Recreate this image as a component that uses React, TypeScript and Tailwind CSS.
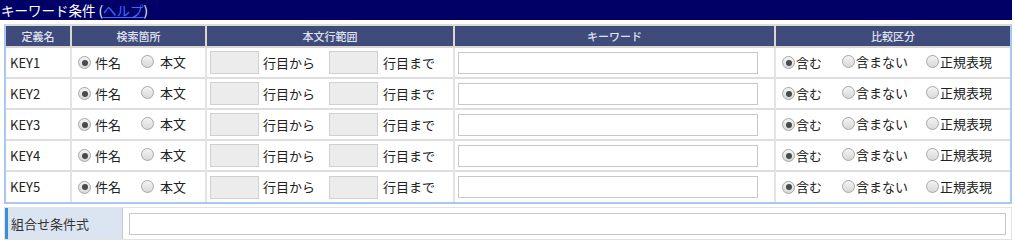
import React from "react";

const font = { fontFamily: '"Noto Sans CJK JP", "Noto Sans", sans-serif' };

const Radio = ({ checked, label, gap = "ml-[5px]" }: { checked?: boolean; label: string; gap?: string }) => (
  <span className="inline-flex items-center">
    <span className="w-[13px] h-[13px] rounded-full border border-[#a8a8a8] bg-gradient-to-b from-[#f4f4f4] to-[#d8d8d8] flex items-center justify-center shrink-0">
      {checked && <span className="w-[6px] h-[6px] rounded-full bg-[#4a4a4a]" />}
    </span>
    <span className={gap}>{label}</span>
  </span>
);

const keys = ["KEY1", "KEY2", "KEY3", "KEY4", "KEY5"];

export default function App() {
  return (
    <div className="w-[1012px] bg-white text-[#222] text-[13px]" style={font}>
      {/* Title */}
      <div className="h-[20px] bg-[#000066] text-white text-[13.5px] leading-[20px] px-[1px]">
        キーワード条件 (<span className="text-[#3b6cff] underline">ヘルプ</span>)
      </div>

      {/* Conditions table */}
      <div className="ml-[4px] mt-[4px] w-[1008px] border-t-2 border-t-[#dcdcd4] border-l-2 border-r-2 border-b-2 border-l-[#a9c8f0] border-r-[#a9c8f0] border-b-[#a9c8f0]">
        <table className="w-full border-collapse table-fixed">
          <colgroup>
            <col className="w-[65px]" />
            <col className="w-[135px]" />
            <col className="w-[248px]" />
            <col className="w-[321px]" />
            <col />
          </colgroup>
          <thead>
            <tr className="h-[21px] bg-[#3f4b7b] text-[#dfe2ee] text-[11px]">
              {["定義名", "検索箇所", "本文行範囲", "キーワード", "比較区分"].map((h, i) => (
                <th key={h} className={`border-b-2 border-[#d8d8d0] ${i > 0 ? "border-l-2" : ""} font-medium`}>
                  {h}
                </th>
              ))}
            </tr>
          </thead>
          <tbody>
            {keys.map((k, r) => (
              <tr key={k} className={`h-[31px] ${r < keys.length - 1 ? "border-b-2 border-[#dedede]" : ""}`}>
                <td className="pl-[4px]">{k}</td>
                <td className="border-l-2 border-[#e4e4e4] pl-[6px]">
                  <div className="flex items-center">
                    <Radio checked label="件名" gap="ml-[4px]" />
                    <span className="ml-[20px]">
                      <Radio label="本文" gap="ml-[6px]" />
                    </span>
                  </div>
                </td>
                <td className="border-l-2 border-[#e4e4e4] pl-[3px]">
                  <div className="flex items-center">
                    <span className="w-[49px] h-[23px] bg-[#ececec] border border-[#d0d0d0]" />
                    <span className="ml-[4px]">行目から</span>
                    <span className="ml-[14px] w-[49px] h-[23px] bg-[#ececec] border border-[#d0d0d0]" />
                    <span className="ml-[5px]">行目まで</span>
                  </div>
                </td>
                <td className="border-l-2 border-[#e4e4e4] pl-[3px]">
                  <div className="w-[300px] h-[22px] bg-white border border-[#c8c8c8]" />
                </td>
                <td className="border-l-2 border-[#e4e4e4] pl-[6px]">
                  <div className="flex items-center">
                    <Radio checked label="含む" gap="ml-[1px]" />
                    <span className="ml-[20px]">
                      <Radio label="含まない" gap="ml-[1px]" />
                    </span>
                    <span className="ml-[18px]">
                      <Radio label="正規表現" gap="ml-[1px]" />
                    </span>
                  </div>
                </td>
              </tr>
            ))}
          </tbody>
        </table>
      </div>

      {/* Combination expression */}
      <div className="ml-[4px] mt-[3px] w-[1008px] h-[33px] flex items-stretch bg-[#f4f4f4] border border-[#e2e2e2]">
        <div className="w-[118px] bg-[#dbe5f1] border-l-[3px] border-[#3a8ee0] border-r border-r-[#c8c8c8] flex items-center pl-[3px] text-[#333]">
          組合せ条件式
        </div>
        <div className="flex-1 bg-white flex items-center pl-[6px] pr-[5px]">
          <div className="w-full h-[22px] border border-[#c8c8c8]" />
        </div>
      </div>
    </div>
  );
}
